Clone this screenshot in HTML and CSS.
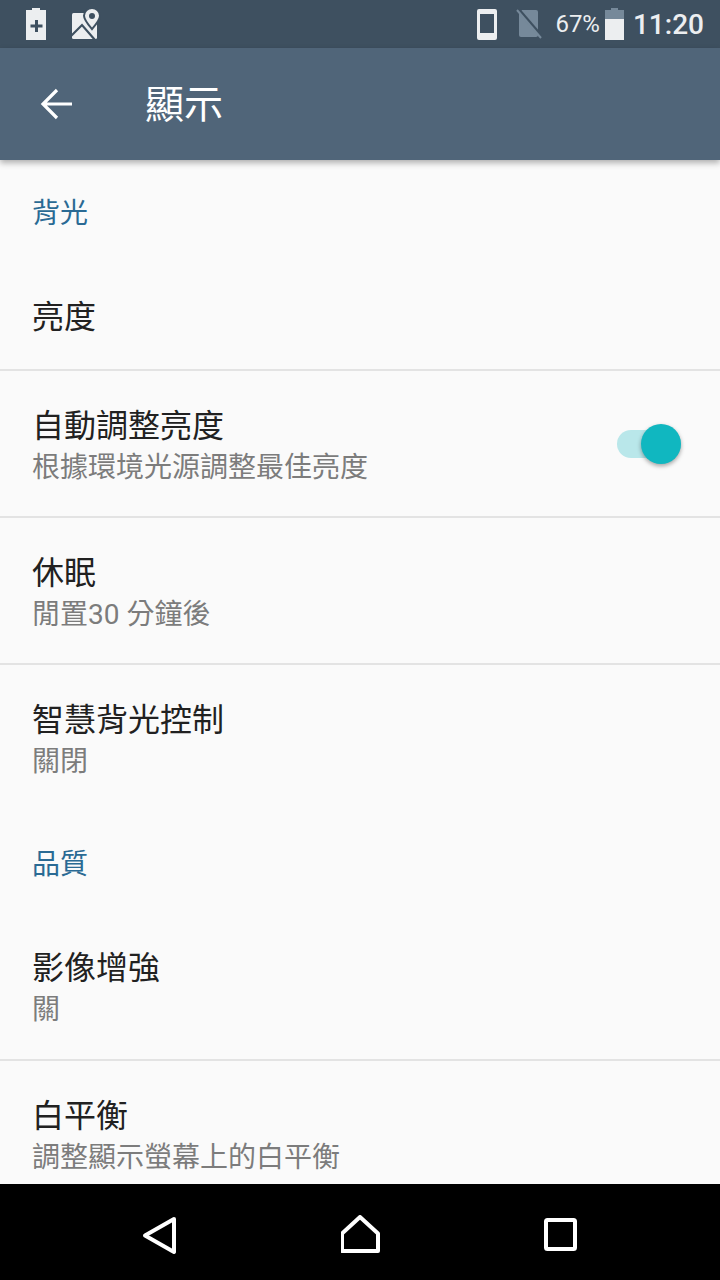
FILE: index.html
```html
<!DOCTYPE html>
<html lang="zh-Hant">
<head>
  <meta charset="UTF-8" />
  <meta name="viewport" content="width=device-width, initial-scale=1.0"/>
  <title>顯示</title>
  <link rel="stylesheet" href="styles.css">
</head>
<body>
  <div class="phone">
    <div class="status-bar">
      <div class="status-left">
        <svg class="icon-charge" viewBox="0 0 20 32" width="20" height="32">
          <path fill="#eceef0" fill-rule="evenodd" d="M6 0h8v2h6v30H0V2h6z M9 12v4.500H4.500v3H9V24h3v-4.500h4.500v-3H12V12z"/>
        </svg>
        <svg class="icon-map" viewBox="0 0 30 32" width="30" height="32">
          <rect x="1" y="5" width="25" height="26" rx="1.500" fill="#eceef0"/>
          <path fill="none" stroke="#3e5060" stroke-width="2.200" d="M0 28L11 17 24 32"/>
          <path fill="#eceef0" stroke="#3e5060" stroke-width="2" d="M21 0c4.400 0 8 3.400 8 7.800 0 3.600-4 8.700-8 13.400-4-4.700-8-9.800-8-13.400C13 3.400 16.600 0 21 0z"/>
          <circle cx="21" cy="8" r="3" fill="#3e5060"/>
        </svg>
      </div>
      <div class="status-right">
        <svg viewBox="0 0 20 31" width="20" height="31">
          <path fill="#eceef0" fill-rule="evenodd" d="M2 0h16a2 2 0 0 1 2 2v27a2 2 0 0 1-2 2H2a2 2 0 0 1-2-2V2a2 2 0 0 1 2-2z M3 5v19h14V5z"/>
        </svg>
        <svg class="icon-sim" viewBox="0 0 26 30" width="26" height="30">
          <path fill="#76899a" d="M6 1h14a2 2 0 0 1 2 2v23a2 2 0 0 1-2 2H5a2 2 0 0 1-2-2V4z"/>
          <path stroke="#3e5060" stroke-width="3.500" d="M2 0l24 28"/>
          <path stroke="#76899a" stroke-width="2" d="M1 1l24 28"/>
        </svg>
        <span class="battery-pct">67%</span>
        <svg class="icon-batt" viewBox="0 0 19 32" width="19" height="32">
          <path fill="#76899a" d="M6 0h7v2h6v9H0V2h6z"/>
          <rect y="11" width="19" height="21" fill="#eceef0"/>
        </svg>
        <span class="clock">11:20</span>
      </div>
    </div>

    <header class="app-bar">
      <svg viewBox="0 0 32 32" width="32" height="32">
        <path fill="none" stroke="#fff" stroke-width="3.200" d="M32 16H3 M17 2L3 16l14 14"/>
      </svg>
      <h1>顯示</h1>
    </header>

    <main class="list">
      <h2 class="section">背光</h2>
      <div class="row row-single"><div class="title">亮度</div></div>
      <div class="row">
        <div class="text">
          <div class="title">自動調整亮度</div>
          <div class="sub">根據環境光源調整最佳亮度</div>
        </div>
        <div class="switch"><span class="knob"></span></div>
      </div>
      <div class="row">
        <div class="text">
          <div class="title">休眠</div>
          <div class="sub">閒置30 分鐘後</div>
        </div>
      </div>
      <div class="row row-last">
        <div class="text">
          <div class="title">智慧背光控制</div>
          <div class="sub">關閉</div>
        </div>
      </div>
      <h2 class="section section-next">品質</h2>
      <div class="row">
        <div class="text text-up">
          <div class="title">影像增強</div>
          <div class="sub">關</div>
        </div>
      </div>
      <div class="row row-last">
        <div class="text">
          <div class="title">白平衡</div>
          <div class="sub">調整顯示螢幕上的白平衡</div>
        </div>
      </div>
    </main>

    <nav class="nav-bar">
      <svg viewBox="0 0 36 40" width="36" height="40">
        <path fill="none" stroke="#fff" stroke-width="4" stroke-linejoin="round" d="M32 4L3 20.500 32 37z"/>
      </svg>
      <svg viewBox="0 0 40 40" width="40" height="40">
        <path fill="none" stroke="#fff" stroke-width="4" stroke-linejoin="round" d="M19 2L37 18.500V36H1V18.500z"/>
      </svg>
      <svg viewBox="0 0 34 34" width="34" height="34">
        <rect x="2" y="2" width="29" height="29" rx="1.500" fill="none" stroke="#fff" stroke-width="4"/>
      </svg>
    </nav>
  </div>
</body>
</html>
```

FILE: styles.css
```css
* {
  box-sizing: border-box;
}

html, body {
  margin: 0;
  background: #fafafa;
}

body {
  font-family: "Roboto", "Noto Sans CJK TC", sans-serif;
}

.phone {
  width: 720px;
  height: 1280px;
  display: flex;
  flex-direction: column;
  overflow: hidden;
}

.status-bar {
  height: 48px;
  flex: none;
  background: #3e5060;
  color: #eceef0;
  display: flex;
  justify-content: space-between;
  align-items: center;
  padding: 0 16px 0 26px;
}

.status-left, .status-right {
  display: flex;
  align-items: center;
}

.icon-map {
  margin-left: 25px;
}

.icon-sim {
  margin-left: 19px;
}

.battery-pct {
  font-size: 24px;
  margin-left: 13px;
}

.icon-batt {
  margin-left: 5px;
}

.clock {
  font-size: 28px;
  font-weight: 500;
  margin-left: 9px;
}

.app-bar {
  height: 112px;
  flex: none;
  background: #506579;
  display: flex;
  align-items: center;
  padding: 0 0 0 40px;
  box-shadow: 0 3px 6px rgba(0, 0, 0, 0.3);
  position: relative;
  z-index: 1;
}

.app-bar h1 {
  margin: 0 0 6px 73px;
  font-size: 39px;
  font-weight: 400;
  color: #fff;
}

.list {
  flex: 1;
  overflow: hidden;
}

.section {
  height: 104px;
  margin: 0;
  padding: 34px 32px 0;
  font-size: 28px;
  line-height: 40px;
  font-weight: 400;
  color: #2a6a94;
}

.section-next {
  height: 103px;
}

.row {
  height: 147px;
  padding: 0 39px 0 32px;
  display: flex;
  justify-content: space-between;
  align-items: center;
  border-bottom: 2px solid #e3e3e3;
}

.row-single {
  height: 107px;
}

.row-last {
  height: 146px;
  border-bottom: none;
}

.text {
  margin-top: 4px;
}

.text-up {
  margin-top: 2px;
}

.title {
  font-size: 32px;
  line-height: 44px;
  color: #212121;
}

.sub {
  font-size: 28px;
  line-height: 40px;
  color: #7c7c7c;
}

.switch {
  width: 64px;
  height: 28px;
  border-radius: 14px;
  background: #b9e7ea;
  position: relative;
}

.knob {
  position: absolute;
  top: -6px;
  right: 0;
  width: 40px;
  height: 40px;
  border-radius: 50%;
  background: #10b7c0;
  box-shadow: 0 2px 4px rgba(0, 0, 0, 0.35);
}

.nav-bar {
  height: 96px;
  flex: none;
  background: #000;
  display: flex;
  align-items: center;
  justify-content: space-between;
  padding: 6px 142px 0;
}
```
